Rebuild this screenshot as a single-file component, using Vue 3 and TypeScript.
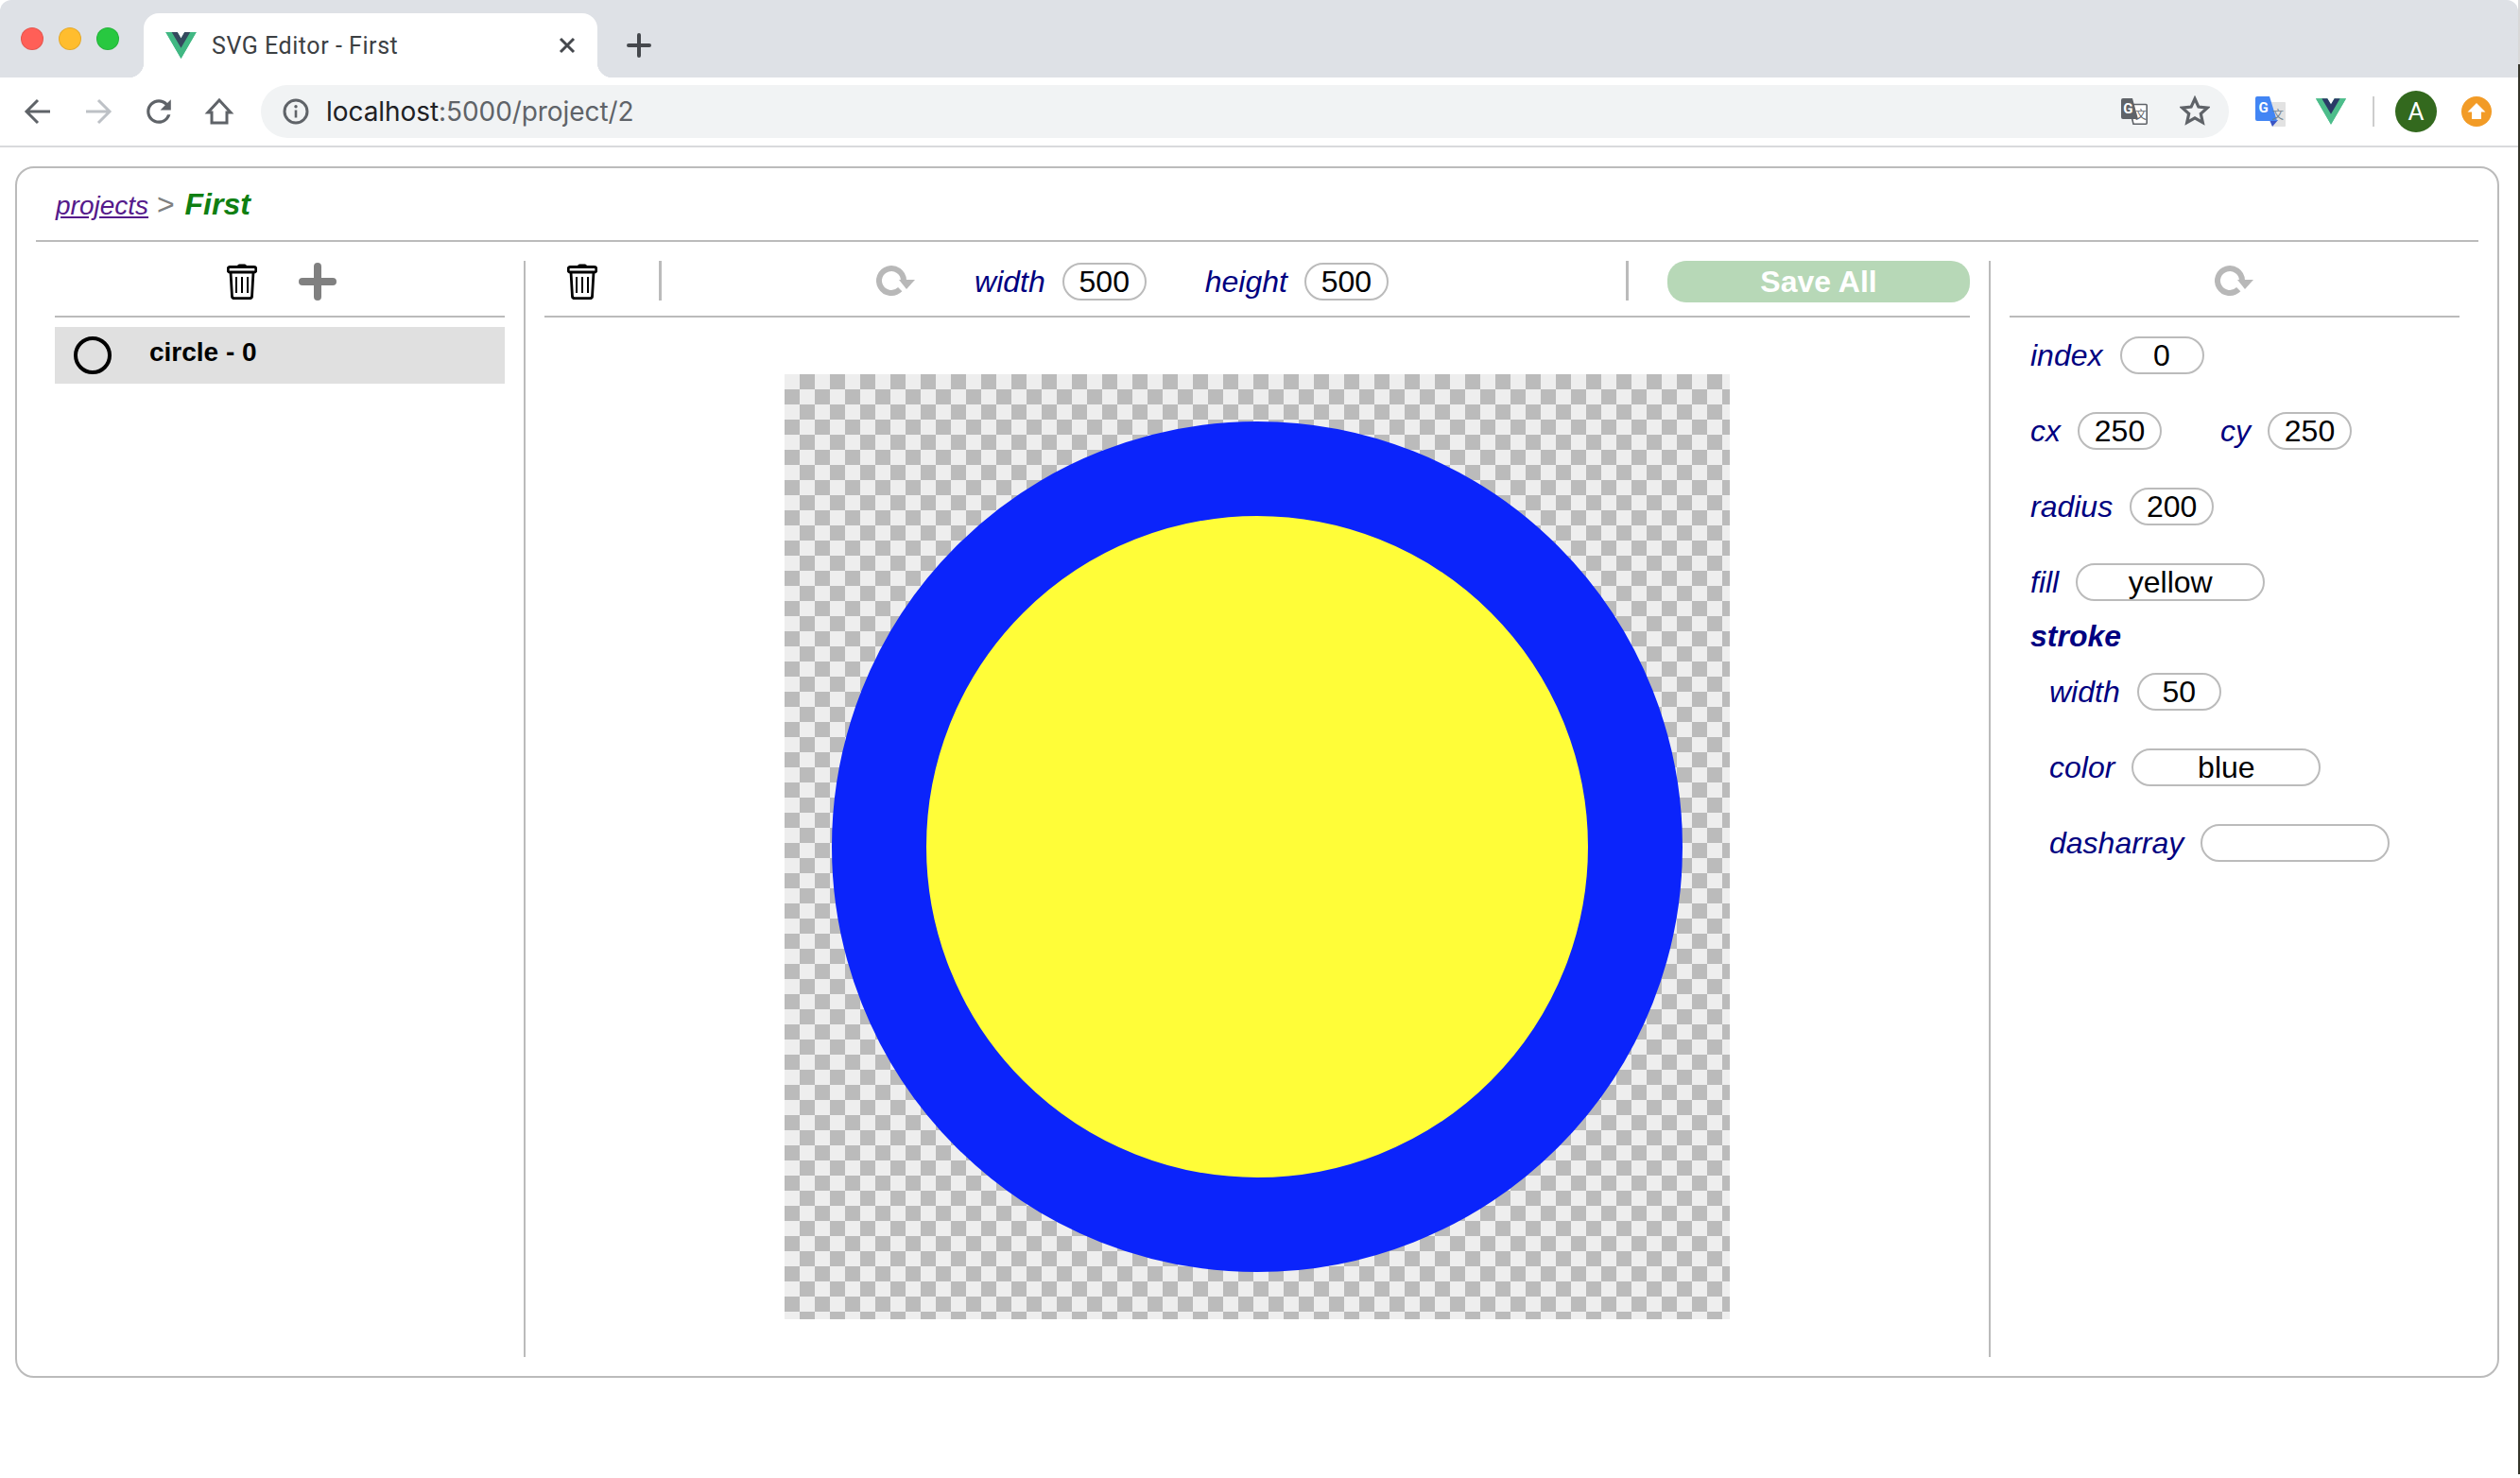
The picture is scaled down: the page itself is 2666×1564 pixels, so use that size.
<script setup lang="ts">
import { ref } from "vue";

const canvasWidth = ref(500);
const canvasHeight = ref(500);
const index = ref(0);
const cx = ref(250);
const cy = ref(250);
const radius = ref(200);
const fill = ref("yellow");
const strokeWidth = ref(50);
const strokeColor = ref("blue");
const dasharray = ref("");
</script>

<template>
  <div class="desktop">
    <div class="window">
      <div class="tabstrip">
        <div class="lights">
          <span class="light red"></span>
          <span class="light amber"></span>
          <span class="light green"></span>
        </div>
        <div class="tab">
          <svg class="favicon" viewBox="0 0 256 221">
            <path fill="#41b883" d="M204.8 0H256L128 220.8 0 0h97.92L128 51.2 158.08 0h46.72z" />
            <path fill="#41b883" d="M0 0l128 220.8L256 0h-51.2L128 132.48 50.56 0H0z" />
            <path fill="#35495e" d="M50.56 0L128 133.12 204.8 0h-47.36L128 51.2 97.92 0H50.56z" />
          </svg>
          <span class="tab-title">SVG Editor - First</span>
          <svg class="tab-close" viewBox="0 0 20 20">
            <path d="M3 3l14 14M17 3L3 17" stroke="#45484d" stroke-width="3" fill="none" />
          </svg>
        </div>
        <svg class="new-tab" viewBox="0 0 26 26">
          <path d="M13 2v22M2 13h22" stroke="#45484d" stroke-width="4" stroke-linecap="round" fill="none" />
        </svg>
      </div>

      <div class="toolbar">
        <svg class="nav" viewBox="0 0 32 32">
          <path d="M29 16H5M16 4L4 16l12 12" stroke="#5f6368" stroke-width="3" fill="none" />
        </svg>
        <svg class="nav" viewBox="0 0 32 32">
          <path d="M3 16h24M16 4l12 12-12 12" stroke="#bdc1c6" stroke-width="3" fill="none" />
        </svg>
        <svg class="nav" viewBox="2 2 20 20">
          <path fill="#5f6368" d="M17.65 6.35A7.958 7.958 0 0 0 12 4c-4.42 0-7.99 3.58-7.99 8s3.57 8 7.99 8c3.73 0 6.84-2.55 7.73-6h-2.08A5.99 5.99 0 0 1 12 18c-3.31 0-6-2.69-6-6s2.69-6 6-6c1.66 0 3.14.69 4.22 1.78L13 11h7V4l-2.35 2.35z" />
        </svg>
        <svg class="nav" viewBox="0 0 32 32">
          <path d="M16 4L28 17h-4v11H8V17H4z" stroke="#5f6368" stroke-width="3" fill="none" stroke-linejoin="miter" />
        </svg>

        <div class="omnibox">
          <svg class="info" viewBox="0 0 28 28">
            <circle cx="14" cy="14" r="12" stroke="#5f6368" stroke-width="3" fill="none" />
            <path d="M14 12.5v8" stroke="#5f6368" stroke-width="2.6" />
            <circle cx="14" cy="8.8" r="1.7" fill="#5f6368" />
          </svg>
          <span class="url"><span class="host">localhost</span>:5000/project/2</span>
          <svg class="page-translate" viewBox="0 0 28 28">
            <path fill="#fff" stroke="#5f6368" stroke-width="1.6" d="M8 6.5h18.2a1 1 0 0 1 1 1v18.7a1 1 0 0 1-1 1H13z" />
            <path fill="#5f6368" d="M2 0h10l6 22H2a2 2 0 0 1-2-2V2a2 2 0 0 1 2-2z" />
            <text x="2.2" y="15.5" class="glyph-g">G</text>
            <text x="15" y="21.5" class="glyph-wen" fill="#5f6368">文</text>
          </svg>
          <svg class="star" viewBox="0 0 32 32">
            <path d="M16 3.5l3.9 8.6 9.4 1-7 6.3 2 9.2-8.3-4.8-8.3 4.8 2-9.2-7-6.3 9.4-1z" stroke="#5f6368" stroke-width="3.2" fill="none" />
          </svg>
        </div>

        <svg class="ext-translate" viewBox="0 0 32 32">
          <path fill="#e2e2e2" d="M14 6h17a1 1 0 0 1 1 1v24a1 1 0 0 1-1 1H18z" />
          <path fill="#3b55c4" d="M15 25h9l-6 7z" />
          <path fill="#4285f4" d="M2 0h13l8 26H2a2 2 0 0 1-2-2V2a2 2 0 0 1 2-2z" />
          <text x="3.4" y="17" class="glyph-g">G</text>
          <text x="18" y="24" class="glyph-wen" fill="#71838f">文</text>
        </svg>
        <svg class="ext-vue" viewBox="0 0 256 221">
          <path fill="#4dbd8b" d="M204.8 0H256L128 220.8 0 0h97.92L128 51.2 158.08 0h46.72z" />
          <path fill="#4dbd8b" d="M0 0l128 220.8L256 0h-51.2L128 132.48 50.56 0H0z" />
          <path fill="#2b3a67" d="M50.56 0L128 133.12 204.8 0h-47.36L128 51.2 97.92 0H50.56z" />
        </svg>
        <span class="toolbar-sep"></span>
        <span class="avatar">A</span>
        <svg class="update" viewBox="0 0 32 32">
          <circle cx="16" cy="16" r="16" fill="#f29b26" />
          <path fill="#fff" d="M16 7l9.5 9.5H21V24H11v-7.5H6.500z" />
        </svg>
      </div>

      <div class="page">
        <div class="frame">
          <div class="crumbs">
            <a class="crumb-link" href="#">projects</a>
            <span class="crumb-sep"> &gt; </span>
            <span class="crumb-current">First</span>
          </div>

          <div class="columns">
            <section class="col col-list">
              <div class="col-tools list-tools">
                <svg class="trash" viewBox="0 0 32 38">
                  <path d="M11 3q0-2.500 2-2.500h6q2 0 2 2.500z" />
                  <rect class="trash-line" x="1.200" y="3.500" width="29.600" height="5.500" rx="2" />
                  <path class="trash-line" d="M4 9l1.500 26q.2 1.600 2.500 1.600h16q2.300 0 2.500-1.600L28 9" />
                  <path class="trash-line thin" d="M10 14v17M16 14v17M22 14v17" />
                </svg>
                <svg class="plus" viewBox="0 0 40 40">
                  <path d="M20 4v32M4 20h32" stroke="#808080" stroke-width="8" stroke-linecap="round" />
                </svg>
              </div>
              <div class="shape-row">
                <svg class="shape-icon" viewBox="0 0 40 40">
                  <circle cx="20" cy="20" r="18" fill="none" stroke="#000" stroke-width="4" />
                </svg>
                <span class="shape-name">circle - 0</span>
              </div>
            </section>

            <section class="col col-canvas">
              <div class="col-tools">
                <svg class="trash canvas-trash" viewBox="0 0 32 38">
                  <path d="M11 3q0-2.500 2-2.500h6q2 0 2 2.500z" />
                  <rect class="trash-line" x="1.200" y="3.500" width="29.600" height="5.500" rx="2" />
                  <path class="trash-line" d="M4 9l1.500 26q.2 1.600 2.500 1.600h16q2.300 0 2.500-1.600L28 9" />
                  <path class="trash-line thin" d="M10 14v17M16 14v17M22 14v17" />
                </svg>
                <span class="tool-sep first-sep"></span>
                <div class="dims">
                  <svg class="reset" viewBox="0 0 40 34">
                    <path d="M28 15.500A13 13 0 1 0 24.200 25.200" fill="none" stroke="#b8b8b8" stroke-width="6" />
                    <path d="M23 15h17l-9 10z" fill="#b8b8b8" />
                  </svg>
                  <label class="field-label width-label">width</label>
                  <input v-model="canvasWidth" class="field num" />
                  <label class="field-label height-label">height</label>
                  <input v-model="canvasHeight" class="field num" />
                </div>
                <span class="tool-sep"></span>
                <button class="save">Save All</button>
              </div>
              <div class="stage">
                <svg class="canvas" viewBox="0 0 500 500">
                  <circle :cx="cx" :cy="cy" :r="radius" :fill="'#fffd38'" :stroke="'#0b24fb'" :stroke-width="strokeWidth" />
                </svg>
              </div>
            </section>

            <section class="col col-props">
              <div class="col-tools props-tools">
                <svg class="reset" viewBox="0 0 40 34">
                  <path d="M28 15.500A13 13 0 1 0 24.200 25.200" fill="none" stroke="#b8b8b8" stroke-width="6" />
                  <path d="M23 15h17l-9 10z" fill="#b8b8b8" />
                </svg>
              </div>
              <div class="props">
                <div class="prop-row">
                  <label class="field-label">index</label>
                  <input v-model="index" class="field num" />
                </div>
                <div class="prop-row">
                  <label class="field-label">cx</label>
                  <input v-model="cx" class="field num" />
                  <label class="field-label cy-label">cy</label>
                  <input v-model="cy" class="field num" />
                </div>
                <div class="prop-row">
                  <label class="field-label">radius</label>
                  <input v-model="radius" class="field num" />
                </div>
                <div class="prop-row tight">
                  <label class="field-label">fill</label>
                  <input v-model="fill" class="field wide" />
                </div>
                <div class="stroke-title">stroke</div>
                <div class="stroke-fields">
                  <div class="prop-row">
                    <label class="field-label">width</label>
                    <input v-model="strokeWidth" class="field num" />
                  </div>
                  <div class="prop-row">
                    <label class="field-label">color</label>
                    <input v-model="strokeColor" class="field wide" />
                  </div>
                  <div class="prop-row">
                    <label class="field-label">dasharray</label>
                    <input v-model="dasharray" class="field wide" />
                  </div>
                </div>
              </div>
            </section>
          </div>
        </div>
      </div>
    </div>
    <div class="desktop-edge"></div>
  </div>
</template>

<style>
html,
body {
  margin: 0;
  background: #fff;
}
</style>

<style scoped>
.desktop {
  display: flex;
  width: 2666px;
  height: 1564px;
  overflow: hidden;
  font-family: "Liberation Sans", Arial, sans-serif;
}

.window {
  width: 2664px;
  height: 1562px;
  background: #fff;
  border-radius: 12px 12px 0 0;
  overflow: hidden;
}

.desktop-edge {
  width: 2px;
  background: linear-gradient(#d8d8d8 0 68px, #35352a 68px 1560px, #fff 1560px);
}

/* browser chrome */
.tabstrip {
  display: flex;
  align-items: flex-end;
  height: 82px;
  background: #dee1e6;
}

.lights {
  display: flex;
  gap: 16px;
  align-self: flex-start;
  padding: 29px 0 0 22px;
  width: 130px;
  box-sizing: border-box;
}

.light {
  width: 24px;
  height: 24px;
  border-radius: 50%;
  box-sizing: border-box;
  border: 1px solid rgba(0, 0, 0, 0.1);
}
.red { background: #ff5f57; }
.amber { background: #ffbd2e; }
.green { background: #28c840; }

.tab {
  position: relative;
  display: flex;
  align-items: center;
  width: 480px;
  height: 68px;
  margin-left: 22px;
  background: #fff;
  border-radius: 16px 16px 0 0;
}

.tab::before,
.tab::after {
  content: "";
  position: absolute;
  bottom: 0;
  width: 16px;
  height: 16px;
}
.tab::before {
  left: -16px;
  background: radial-gradient(circle at 0 0, transparent 16px, #fff 16.500px);
}
.tab::after {
  right: -16px;
  background: radial-gradient(circle at 100% 0, transparent 16px, #fff 16.500px);
}

.favicon {
  width: 33px;
  height: 28px;
  margin-left: 23px;
}

.tab-title {
  margin-left: 16px;
  font: 25px Roboto, sans-serif;
  color: #3c4043;
  letter-spacing: 0.55px;
}

.tab-close {
  width: 20px;
  height: 20px;
  margin-left: auto;
  margin-right: 22px;
}

.new-tab {
  width: 26px;
  height: 26px;
  margin: 0 0 21px 31px;
}

.toolbar {
  display: flex;
  align-items: center;
  height: 72px;
  border-bottom: 2px solid #d9dadd;
  padding-left: 24px;
}

.nav {
  width: 32px;
  height: 32px;
  margin-right: 32px;
}

.omnibox {
  display: flex;
  align-items: center;
  width: 2082px;
  height: 56px;
  margin-left: -4px;
  background: #f1f3f4;
  border-radius: 28px;
}

.info {
  width: 28px;
  height: 28px;
  margin-left: 23px;
}

.url {
  margin-left: 18px;
  font: 28px Inter, sans-serif;
  letter-spacing: -0.07px;
  color: #5f6368;
}
.host {
  color: #202124;
}

.page-translate {
  width: 28px;
  height: 28px;
  margin-left: auto;
}

.star {
  width: 32px;
  height: 32px;
  margin: 0 20px 2px 34px;
}

.glyph-g {
  font: bold 15px Roboto, sans-serif;
  fill: #fff;
}
.glyph-wen {
  font: 12px "Noto Sans CJK SC", sans-serif;
}

.ext-translate {
  width: 32px;
  height: 32px;
  margin-left: 28px;
}

.ext-vue {
  width: 32px;
  height: 28px;
  margin-left: 32px;
}

.toolbar-sep {
  width: 2px;
  height: 32px;
  margin-left: 28px;
  background: #cdcdcd;
}

.avatar {
  display: flex;
  align-items: center;
  justify-content: center;
  width: 44px;
  height: 44px;
  margin-left: 22px;
  border-radius: 50%;
  background: #33691e;
  color: #fff;
  font: 26px Roboto, sans-serif;
}

.update {
  width: 32px;
  height: 32px;
  margin-left: 26px;
}

/* app */
.page {
  padding: 20px 0 0 16px;
}

.frame {
  width: 2628px;
  height: 1282px;
  box-sizing: border-box;
  border: 2px solid #bbb;
  border-radius: 20px;
}

.crumbs {
  height: 60px;
  margin: 0 20px;
  padding: 16px 0 0 21px;
  border-bottom: 2px solid #bbb;
  font-size: 32px;
  line-height: 44px;
}

.crumb-link {
  font-size: 28px;
  font-style: italic;
  color: #551a8b;
}

.crumb-sep {
  color: #808080;
}

.crumb-current {
  margin-left: 2px;
  font-weight: bold;
  font-style: italic;
  color: #0f7f12;
}

.columns {
  display: flex;
  height: 1160px;
  margin: 20px 0 0 20px;
}

.col {
  box-sizing: border-box;
  padding: 0 20px;
}

.col-list {
  width: 518px;
  border-right: 2px solid #bbb;
}

.col-canvas {
  width: 1550px;
  border-right: 2px solid #bbb;
}

.col-props {
  width: 516px;
}

.col-tools {
  display: flex;
  align-items: flex-start;
  box-sizing: border-box;
  height: 60px;
  border-bottom: 2px solid #bbb;
}

.list-tools {
  justify-content: center;
  padding-left: 4px;
  gap: 44px;
}

.props-tools {
  justify-content: center;
}

.props-tools .reset {
  margin-top: 5px;
}

.trash {
  width: 32px;
  height: 38px;
  margin-top: 3px;
  flex: none;
}

.trash-line {
  fill: none;
  stroke: #000;
  stroke-width: 2.800;
}

.trash-line.thin {
  stroke-width: 2;
}

.plus {
  width: 40px;
  height: 40px;
  margin-top: 2px;
}

.canvas-trash {
  margin-left: 24px;
}

.tool-sep {
  flex: none;
  width: 3px;
  height: 42px;
  background: #bbb;
}

.first-sep {
  margin-left: 65px;
}

.dims {
  flex: 1;
  display: flex;
  align-items: center;
  justify-content: center;
  height: 44px;
  padding-right: 23px;
}

.reset {
  flex: none;
  width: 40px;
  height: 34px;
  overflow: visible;
}

.width-label {
  margin-left: 63px;
}

.height-label {
  margin-left: 62px;
}

.field-label {
  margin-right: 18px;
  font-size: 32px;
  font-style: italic;
  color: #000080;
}

.field {
  height: 40px;
  box-sizing: border-box;
  padding: 0;
  border: 2px solid #bbb;
  border-radius: 20px;
  outline: none;
  background: #fff;
  color: #000;
  font: 32px "Liberation Sans", Arial, sans-serif;
  text-align: center;
}

.num {
  width: 89px;
}

.wide {
  width: 200px;
}

.save {
  flex: none;
  width: 320px;
  height: 44px;
  margin-left: 41px;
  padding: 0;
  border: none;
  border-radius: 20px;
  background: #b7d8b7;
  color: #fff;
  font: bold 32px "Liberation Sans", Arial, sans-serif;
}

.shape-row {
  display: flex;
  align-items: center;
  height: 60px;
  margin-top: 10px;
  background: #e0e0e0;
}

.shape-icon {
  width: 40px;
  height: 40px;
  margin-left: 20px;
}

.shape-name {
  margin: 0 0 6px 40px;
  font-size: 28px;
  font-weight: bold;
  color: #000;
}

.stage {
  display: flex;
  justify-content: center;
  margin-top: 60px;
}

.canvas {
  display: block;
  width: 1000px;
  height: 1000px;
  background: repeating-conic-gradient(#bbb 0 25%, #eee 0 50%) 0 0 / 32px 32px;
}

.props {
  padding: 20px 0 0 22px;
}

.prop-row {
  display: flex;
  align-items: center;
  height: 40px;
  margin-bottom: 40px;
}

.prop-row.tight {
  margin-bottom: 0;
}

.cy-label {
  margin-left: 62px;
}

.stroke-title {
  height: 76px;
  line-height: 74px;
  font-size: 32px;
  font-weight: bold;
  font-style: italic;
  color: #000080;
}

.stroke-fields {
  padding-left: 20px;
}
</style>
